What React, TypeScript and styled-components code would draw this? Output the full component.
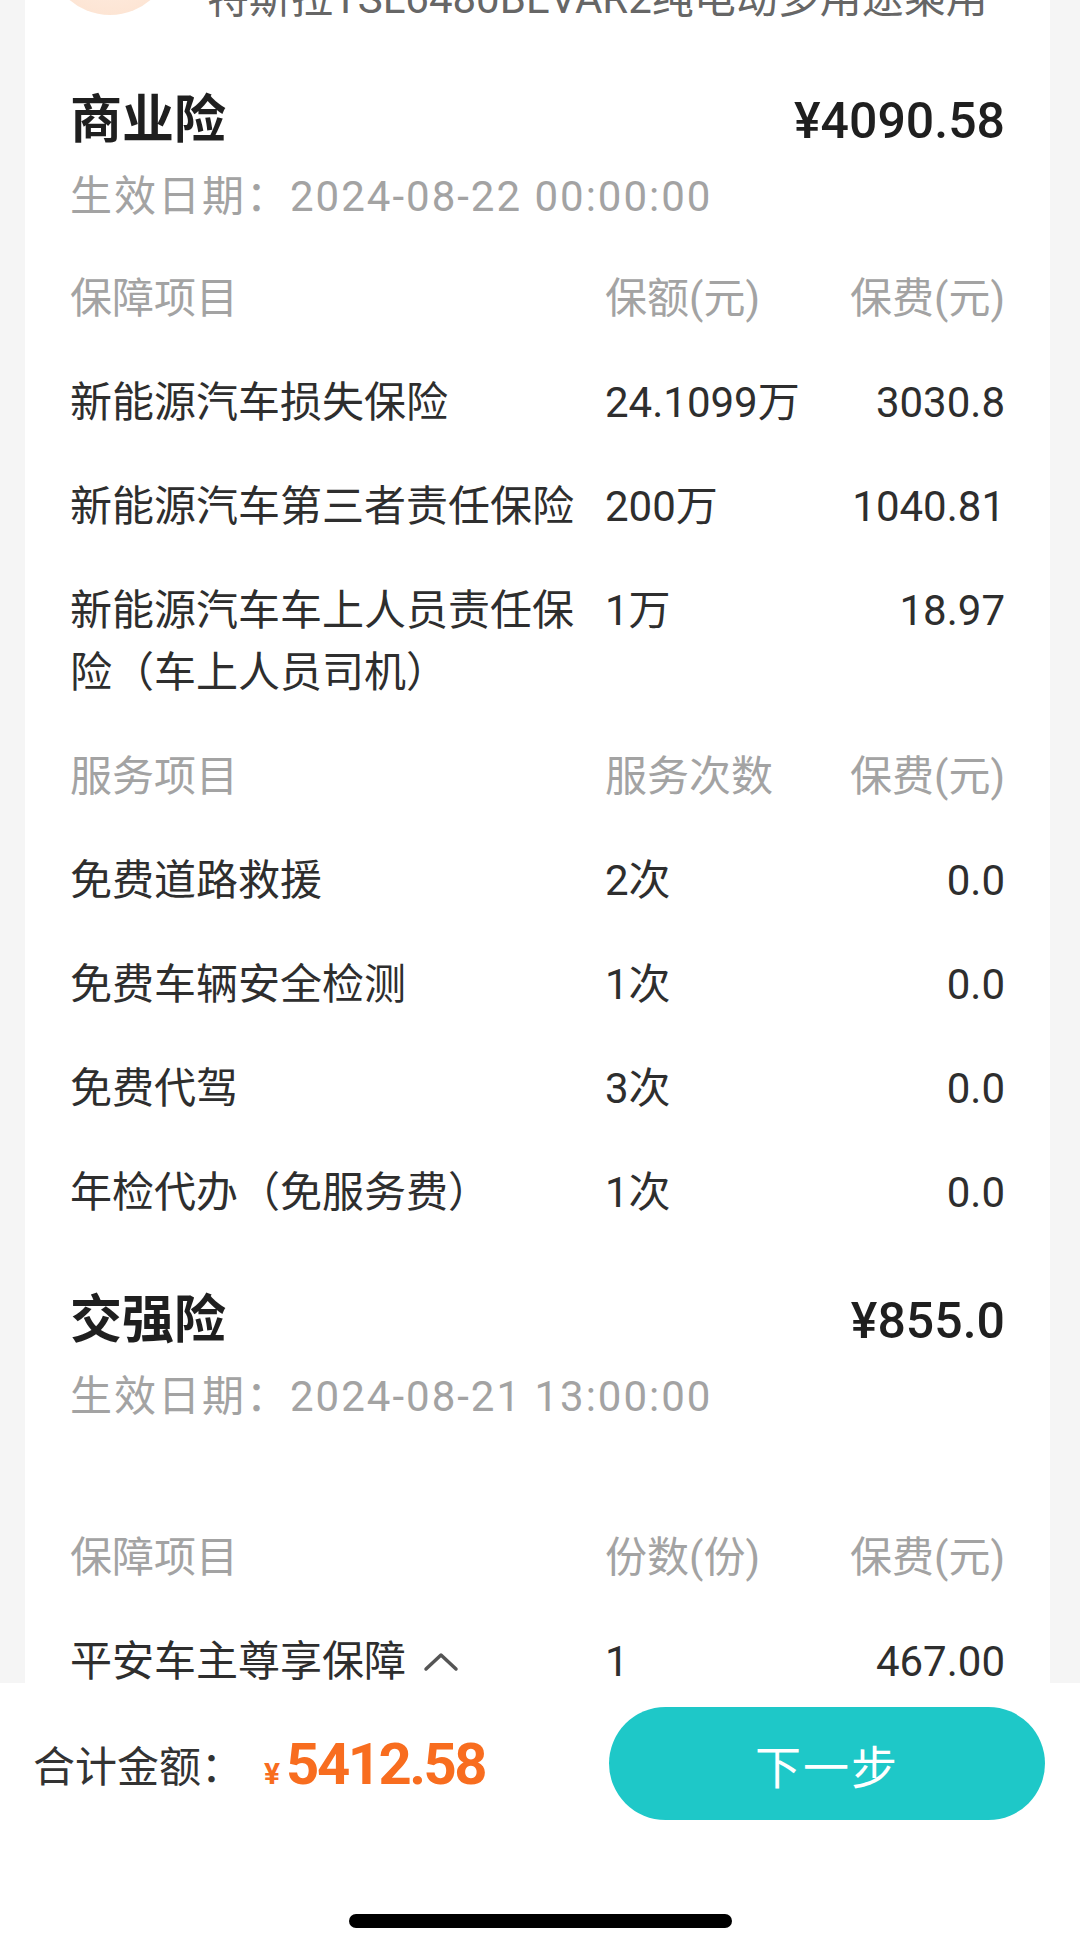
import React from "react";
import styled, { createGlobalStyle } from "styled-components";

const GlobalStyle = createGlobalStyle`
  html, body {
    margin: 0;
    padding: 0;
    background: #f5f5f5;
  }
  body {
    font-family: Roboto, "Noto Sans CJK SC", sans-serif;
    -webkit-font-smoothing: antialiased;
  }
  * { box-sizing: border-box; }
`;

const Screen = styled.div`
  width: 1080px;
  height: 1933px;
  display: flex;
  flex-direction: column;
  overflow: hidden;
  background: #f5f5f5;
`;

const ScrollArea = styled.div`
  flex: 1;
  min-height: 0;
  overflow: hidden;
  padding: 0 30px 0 25px;
`;

const Card = styled.div`
  background: #fff;
  margin-top: -137px;
  padding: 28px 45px 0 45px;
`;

const VehicleRow = styled.div`
  display: flex;
  align-items: flex-start;
  margin-left: -22px;
`;

const Avatar = styled.div`
  width: 124px;
  height: 124px;
  border-radius: 50%;
  flex: none;
  background: radial-gradient(circle at 50% 40%, #fff3ea 0%, #fde6d6 70%, #fbe0cd 100%);
`;

const VehicleName = styled.div`
  margin: 79px 0 0 35px;
  font-size: 42px;
  line-height: 58px;
  color: #666;
  white-space: nowrap;
`;

const Section = styled.section<{ $top: number }>`
  padding-top: ${(p) => p.$top}px;
`;

const TitleRow = styled.div`
  display: flex;
  align-items: center;
  justify-content: space-between;
  height: 72px;
`;

const Title = styled.h2`
  margin: 0;
  font-size: 52px;
  line-height: 72px;
  font-weight: 700;
  color: #1f1f1f;
`;

const Premium = styled.div`
  font-size: 50px;
  font-weight: 500;
  color: #1f1f1f;
`;

const DateLine = styled.div`
  margin-top: 10px;
  font-size: 42px;
  line-height: 60px;
  color: #a3a3a3;
  letter-spacing: 2px;
`;

const Table = styled.div<{ $top: number }>`
  margin-top: ${(p) => p.$top}px;
`;

const Row = styled.div<{ $head?: boolean }>`
  display: grid;
  grid-template-columns: 535px 1fr auto;
  padding: 21px 0;
  font-size: 42px;
  line-height: 62px;
  color: ${(p) => (p.$head ? "#a3a3a3" : "#2e2e2e")};
`;

const NameCell = styled.div`
  display: flex;
  align-items: center;
`;

const Cell = styled.div`
  text-align: left;
`;

const FeeCell = styled.div`
  text-align: right;
`;

const Chevron = styled.svg`
  width: 36px;
  height: 20px;
  margin-left: 17px;
  flex: none;
`;

const BottomBar = styled.div`
  flex: none;
  height: 250px;
  background: #fff;
  padding-top: 24px;
  display: flex;
  flex-direction: column;
`;

const TotalRow = styled.div`
  display: flex;
  align-items: center;
  justify-content: space-between;
  height: 113px;
  padding: 0 35px 0 33px;
`;

const TotalInfo = styled.div`
  display: flex;
  align-items: center;
`;

const TotalLabel = styled.span`
  font-size: 42px;
  color: #333;
`;

const TotalAmount = styled.span`
  margin-left: 21px;
  display: flex;
  align-items: baseline;
  color: #f86d1f;
  font-weight: 700;
`;

const Yen = styled.span`
  font-size: 30px;
  margin-right: 6px;
`;

const AmountNumber = styled.span`
  font-size: 58px;
  letter-spacing: -2.5px;
`;

const NextButton = styled.button`
  width: 436px;
  height: 113px;
  border: none;
  border-radius: 57px;
  background: #1ec8c8;
  color: #fff;
  font-family: inherit;
  font-size: 46px;
  letter-spacing: 2px;
  padding: 0;
`;

const HomeIndicator = styled.div`
  width: 383px;
  height: 14px;
  border-radius: 7px;
  background: #000;
  margin: 94px auto 0;
`;

type Item = { name: React.ReactNode; mid: string; fee: string };

const commercialItems: Item[] = [
  { name: "新能源汽车损失保险", mid: "24.1099万", fee: "3030.8" },
  { name: "新能源汽车第三者责任保险", mid: "200万", fee: "1040.81" },
  { name: "新能源汽车车上人员责任保险（车上人员司机）", mid: "1万", fee: "18.97" },
];

const serviceItems: Item[] = [
  { name: "免费道路救援", mid: "2次", fee: "0.0" },
  { name: "免费车辆安全检测", mid: "1次", fee: "0.0" },
  { name: "免费代驾", mid: "3次", fee: "0.0" },
  { name: "年检代办（免服务费）", mid: "1次", fee: "0.0" },
];

const TableRows: React.FC<{ items: Item[] }> = ({ items }) => (
  <>
    {items.map((it, i) => (
      <Row key={i}>
        <NameCell>{it.name}</NameCell>
        <Cell>{it.mid}</Cell>
        <FeeCell>{it.fee}</FeeCell>
      </Row>
    ))}
  </>
);

const HeadRow: React.FC<{ a: string; b: string; c: string }> = ({ a, b, c }) => (
  <Row $head>
    <NameCell>{a}</NameCell>
    <Cell>{b}</Cell>
    <FeeCell>{c}</FeeCell>
  </Row>
);

export default function App() {
  return (
    <>
      <GlobalStyle />
      <Screen>
        <ScrollArea>
          <Card>
            <VehicleRow>
              <Avatar />
              <VehicleName>特斯拉TSL6480BEVAR2纯电动多用途乘用</VehicleName>
            </VehicleRow>

            <Section $top={57}>
              <TitleRow>
                <Title>商业险</Title>
                <Premium>¥4090.58</Premium>
              </TitleRow>
              <DateLine>生效日期：2024-08-22 00:00:00</DateLine>
              <Table $top={20}>
                <HeadRow a="保障项目" b="保额(元)" c="保费(元)" />
                <TableRows items={commercialItems} />
                <HeadRow a="服务项目" b="服务次数" c="保费(元)" />
                <TableRows items={serviceItems} />
              </Table>
            </Section>

            <Section $top={40}>
              <TitleRow>
                <Title>交强险</Title>
                <Premium>¥855.0</Premium>
              </TitleRow>
              <DateLine>生效日期：2024-08-21 13:00:00</DateLine>
              <Table $top={79}>
                <HeadRow a="保障项目" b="份数(份)" c="保费(元)" />
                <Row>
                  <NameCell>
                    平安车主尊享保障
                    <Chevron viewBox="0 0 36 20" fill="none">
                      <path
                        d="M3 17 L18 3 L33 17"
                        stroke="#555"
                        strokeWidth="3.5"
                        strokeLinecap="round"
                        strokeLinejoin="round"
                      />
                    </Chevron>
                  </NameCell>
                  <Cell>1</Cell>
                  <FeeCell>467.00</FeeCell>
                </Row>
              </Table>
            </Section>
          </Card>
        </ScrollArea>

        <BottomBar>
          <TotalRow>
            <TotalInfo>
              <TotalLabel>合计金额：</TotalLabel>
              <TotalAmount>
                <Yen>¥</Yen>
                <AmountNumber>5412.58</AmountNumber>
              </TotalAmount>
            </TotalInfo>
            <NextButton>下一步</NextButton>
          </TotalRow>
          <HomeIndicator />
        </BottomBar>
      </Screen>
    </>
  );
}
